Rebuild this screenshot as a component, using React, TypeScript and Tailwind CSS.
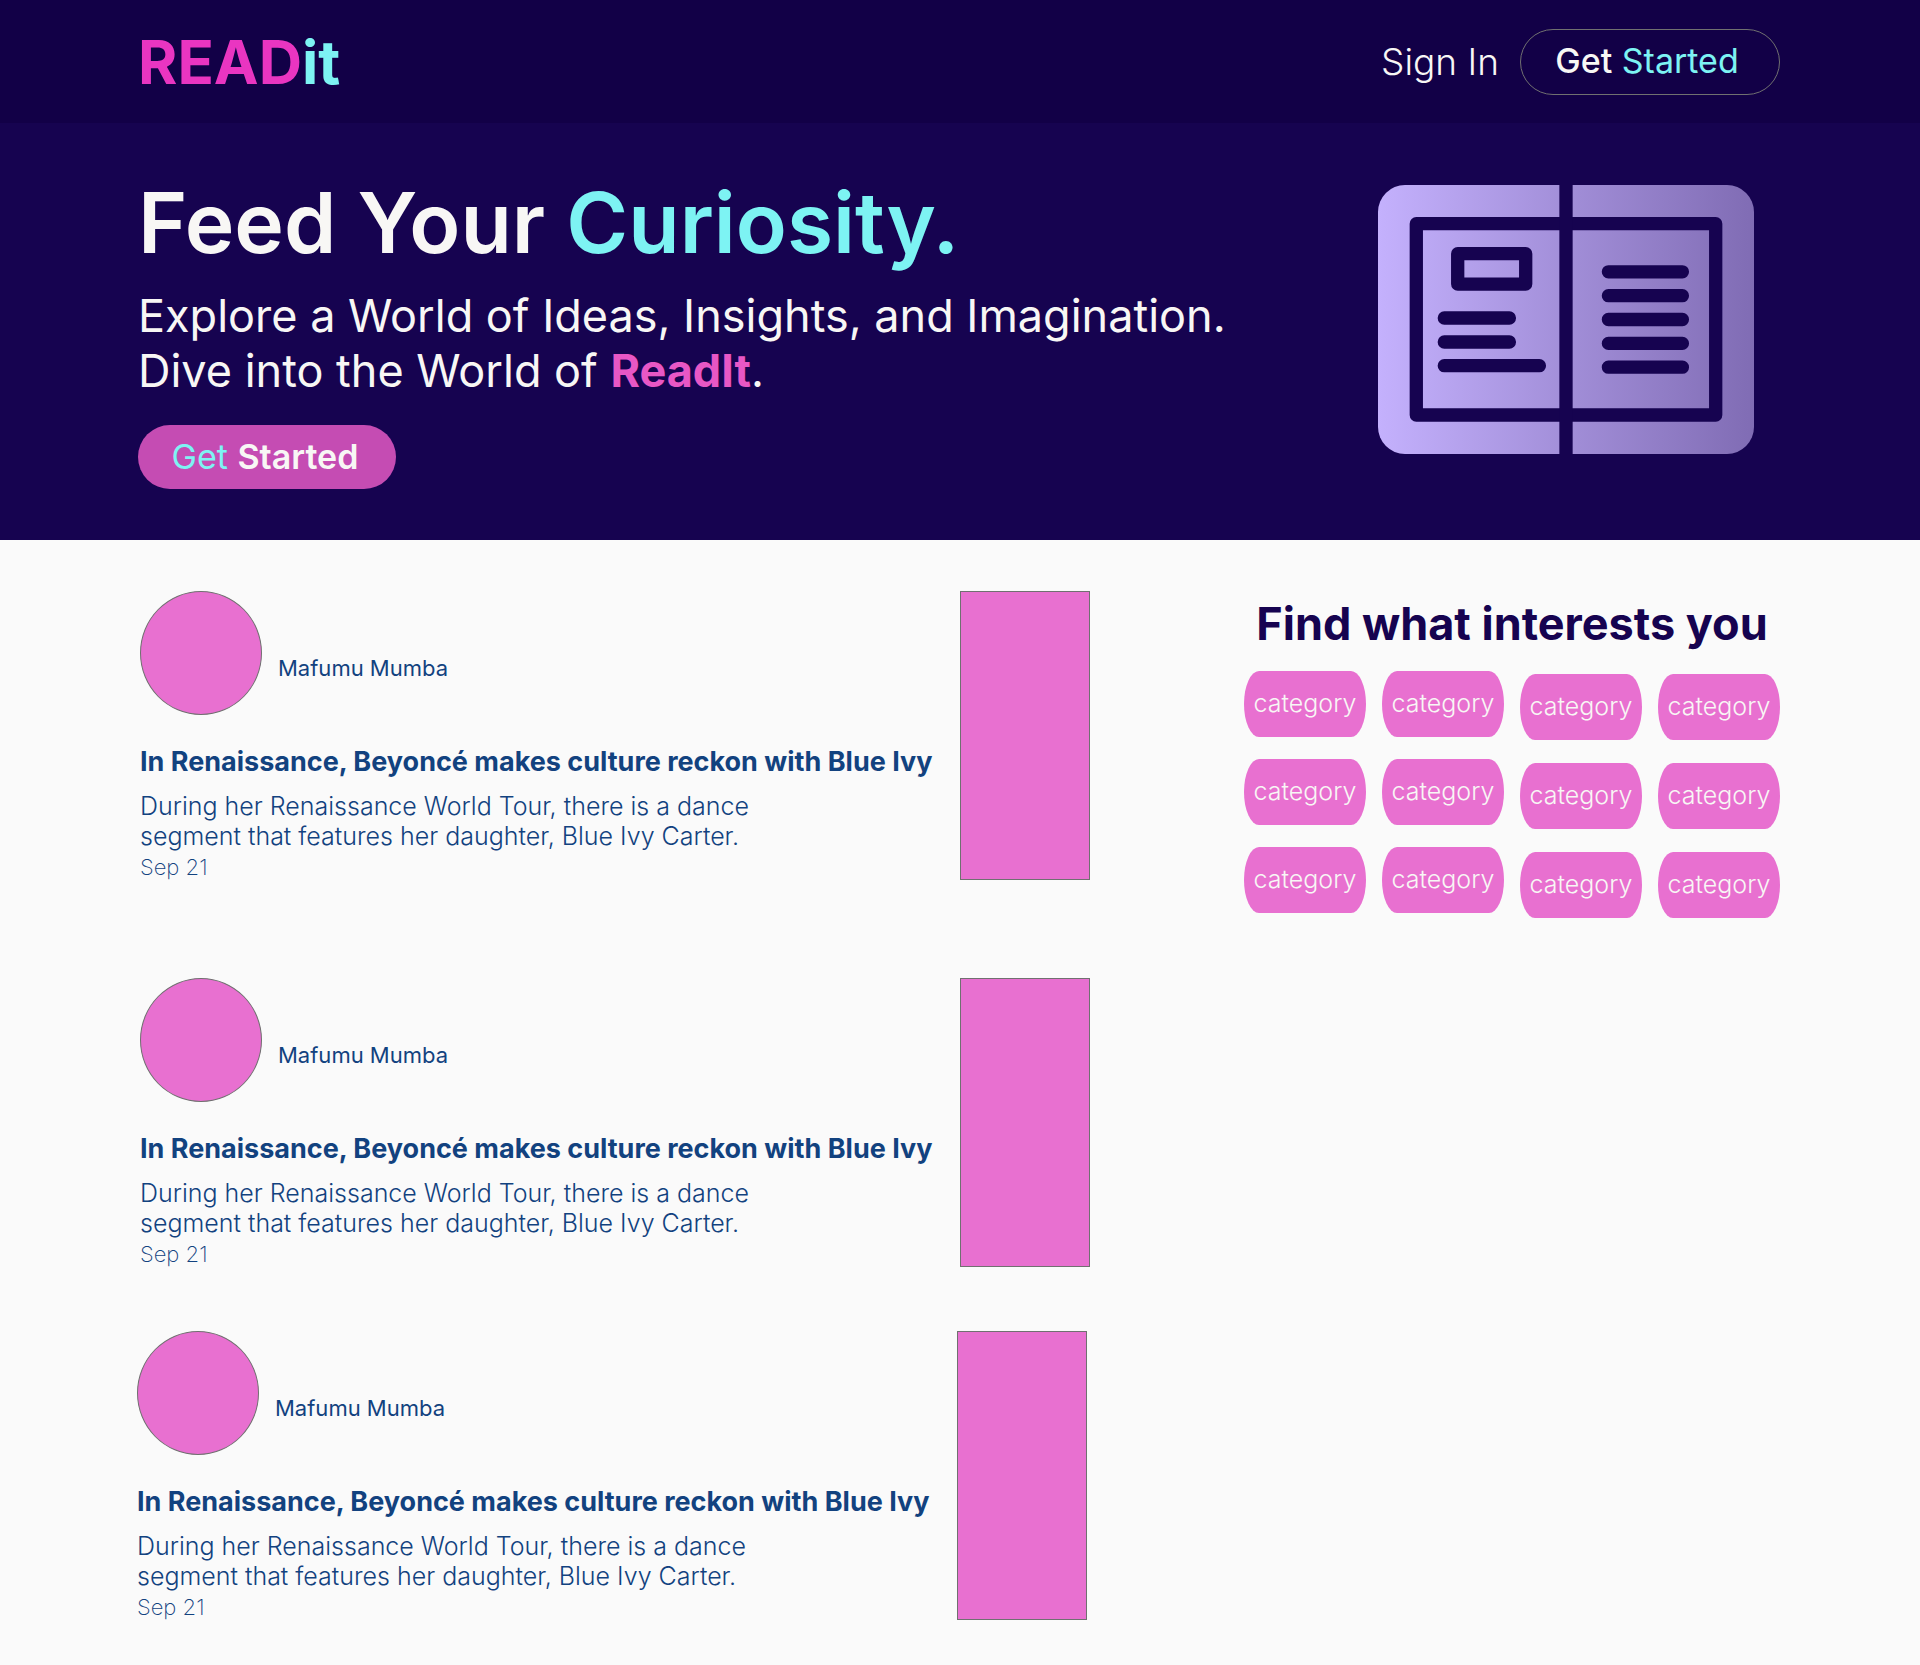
const stories = [
  {
    id: 1,
    author: "Mafumu Mumba",
    title: "In Renaissance, Beyoncé makes culture reckon with Blue Ivy",
    date: "Sep 21",
    spacing: "pl-[3px]",
  },
  {
    id: 2,
    author: "Mafumu Mumba",
    title: "In Renaissance, Beyoncé makes culture reckon with Blue Ivy",
    date: "Sep 21",
    spacing: "mt-[95px] pl-[3px]",
  },
  {
    id: 3,
    author: "Mafumu Mumba",
    title: "In Renaissance, Beyoncé makes culture reckon with Blue Ivy",
    date: "Sep 21",
    spacing: "mt-[61px]",
  },
];

function BookIcon() {
  return (
    <svg viewBox="0 0 376 269" className="w-[376px] shrink-0" role="img" aria-label="Open book">
      <defs>
        <linearGradient id="cover" x1="0" y1="0" x2="1" y2="0">
          <stop offset="0" stopColor="#c4b1fd" />
          <stop offset="1" stopColor="#806cb4" />
        </linearGradient>
      </defs>
      <rect width="376" height="269" rx="27" fill="url(#cover)" />
      <g fill="none" stroke="#160350" strokeWidth="13.3" strokeLinejoin="round" strokeLinecap="round">
        <rect x="38.3" y="38.7" width="299.4" height="191.3" />
        <path d="M188 -10V280" />
        <rect x="79.7" y="68.7" width="68" height="30.4" />
        <path d="M66.3 133H131.4M66.3 157H131.4M66.3 180.7H161.4" />
        <path d="M230.4 86.8H304.4M230.4 110.7H304.4M230.4 134.5H304.4M230.4 158.4H304.4M230.4 182.2H304.4" />
      </g>
    </svg>
  );
}

function Category() {
  return (
    <button
      type="button"
      className="flex h-[66px] w-[122px] items-center justify-center rounded-[15px/33px] bg-[#e870d0] text-[25px] font-light text-[#f8f7f5]"
    >
      category
    </button>
  );
}

function Story({ author, title, date, spacing }: (typeof stories)[number]) {
  return (
    <article className={`flex items-start gap-[30px] text-[#12427f] ${spacing}`}>
      <div className="w-[790px]">
        <div className="flex items-end gap-4">
          <div className="h-[124px] w-[122px] rounded-[50%] border border-[#707070] bg-[#e870d0]" />
          <p className="pb-8 text-[22px] leading-[30px]">{author}</p>
        </div>
        <h3 className="mt-[31px] text-[27px] leading-8 font-bold whitespace-nowrap">{title}</h3>
        <p className="mt-[13px] text-[25px] leading-[30px] font-light">
          During her Renaissance World Tour, there is a dance
          <br />
          segment that features her daughter, Blue Ivy Carter.
        </p>
        <time className="block text-[22px] leading-8 font-extralight">{date}</time>
      </div>
      <div className="h-[289px] w-[130px] border border-[#707070] bg-[#e870d0]" />
    </article>
  );
}

export default function App() {
  return (
    <div className="min-h-screen bg-[#fafafa] font-['Inter',sans-serif]">
      <header className="flex h-[123px] items-center justify-between bg-[#120047] pr-[140px] pl-[138px]">
        <a href="#" className="text-[60px] font-bold text-[#e935c1]">
          READ<span className="text-[#7df3f3]">it</span>
        </a>
        <nav className="flex items-center gap-[21px]">
          <a href="#" className="text-[37px] font-light text-[#f8f7f5]">
            Sign In
          </a>
          <button
            type="button"
            className="h-[66px] w-[260px] rounded-full border border-[#707070] pr-[6px] pb-[2px] text-[34px] text-[#f8f7f5]"
          >
            <span className="font-medium">Get</span> <span className="text-[#7df3f3]">Started</span>
          </button>
        </nav>
      </header>

      <section className="flex items-start justify-between bg-[#160350] pt-[51px] pr-[166px] pb-[51px] pl-[138px]">
        <div className="text-[#f8f7f5]">
          <h1 className="text-[84px] leading-[98px] font-semibold">
            Feed Your <span className="text-[#7df3f3]">Curiosity.</span>
          </h1>
          <p className="mt-4 text-[45px] leading-[55px] font-normal">
            Explore a World of Ideas, Insights, and Imagination.
            <br />
            Dive into the World of <strong className="font-bold text-[#e857c5]">ReadIt</strong>.
          </p>
          <button type="button" className="mt-[27px] h-16 w-[258px] rounded-full bg-[#c54cb3] pr-[4px] pb-[2px] text-[34px]">
            <span className="text-[#7df3f3]">Get</span> <span className="font-semibold">Started</span>
          </button>
        </div>
        <div className="pt-[11px]">
          <BookIcon />
        </div>
      </section>

      <main className="flex items-start justify-between pt-[51px] pr-[140px] pb-[43px] pl-[137px]">
        <div>
          {stories.map((story) => (
            <Story key={story.id} {...story} />
          ))}
        </div>
        <aside className="pt-[6px]">
          <h2 className="text-center text-[45px] leading-[54px] font-bold text-[#160350]">Find what interests you</h2>
          <div className="mt-5 flex items-start gap-4">
            <div className="grid grid-cols-2 gap-x-4 gap-y-[22px]">
              {Array.from({ length: 6 }, (_, i) => (
                <Category key={i} />
              ))}
            </div>
            <div className="grid grid-cols-2 gap-x-4 gap-y-[23px] pt-[3px]">
              {Array.from({ length: 6 }, (_, i) => (
                <Category key={i} />
              ))}
            </div>
          </div>
        </aside>
      </main>
    </div>
  );
}
